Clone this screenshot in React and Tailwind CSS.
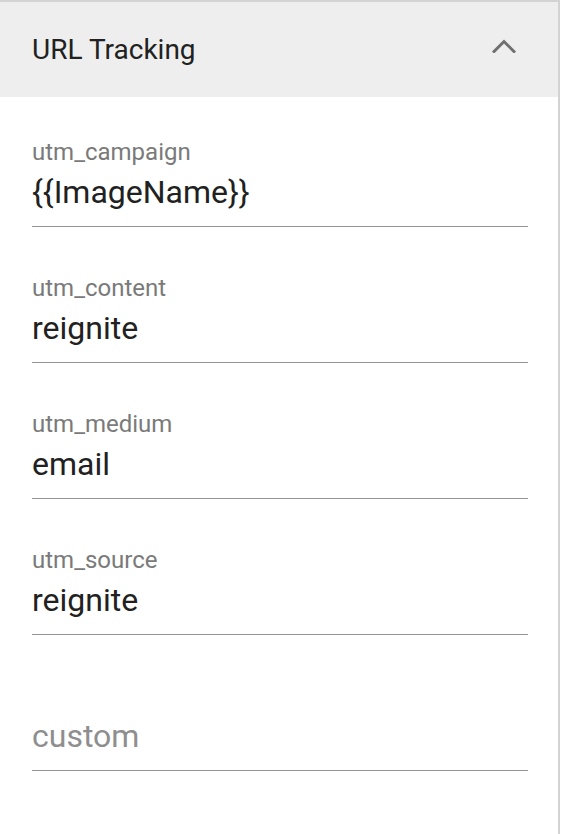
import React from 'react';

const fields = [
    { name: 'utm_campaign', value: '{{ImageName}}' },
    { name: 'utm_content', value: 'reignite' },
    { name: 'utm_medium', value: 'email' },
    { name: 'utm_source', value: 'reignite' },
    { name: 'custom', value: '', placeholder: 'custom' },
];

function ChevronUp() {
    return (
        <svg width="24" height="14" viewBox="0 0 24 14" fill="none" className="mb-[8px]">
            <polyline points="2,12.5 12,2.5 22,12.5" stroke="#707070" strokeWidth="3" strokeLinecap="square" />
        </svg>
    );
}

function Field({ name, value, placeholder }) {
    return (
        <div className="flex flex-col">
            <label className="h-[28px] text-[24px] leading-[28px] text-[#7a7a7a]">
                {value ? name : ''}
            </label>
            <input
                type="text"
                defaultValue={value}
                placeholder={placeholder}
                className="mt-[7px] h-[38px] text-[32px] leading-[38px] text-[#212121] placeholder:text-[#8e8e8e] outline-none bg-transparent"
            />
            <div className="h-[16px] border-b border-[#939393]" />
        </div>
    );
}

export default function App() {
    return (
        <div className="flex bg-white" style={{ fontFamily: 'Roboto, "Noto Sans", sans-serif' }}>
            <div className="w-[560px] h-[834px] border-t-2 border-r-2 border-[#d3d3d3] bg-white">
                <div className="h-[95px] bg-[#eeeeee] flex items-center justify-between pl-8 pr-[42px]">
                    <span className="text-[28px] leading-[34px] text-[#212121]">URL Tracking</span>
                    <ChevronUp />
                </div>
                <div className="flex flex-col gap-[47px] pt-[41px] pl-8 pr-[30px]">
                    {fields.map((f) => (
                        <Field key={f.name} {...f} />
                    ))}
                </div>
            </div>
        </div>
    );
}
